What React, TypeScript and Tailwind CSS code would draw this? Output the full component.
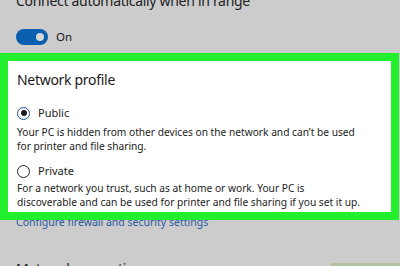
const font = { fontFamily: '"Noto Sans", "Open Sans", sans-serif' };

function Radio({ checked, label }: { checked: boolean; label: string }) {
  return (
    <div className="flex h-[14px] items-center gap-[8px]">
      <span
        className={`flex h-[13px] w-[13px] items-center justify-center rounded-full border-[1.5px] ${
          checked ? "border-[#1f4f8f]" : "border-[#222]"
        } bg-white`}
      >
        {checked ? <span className="h-[6px] w-[6px] rounded-full bg-[#1b1b1b]" /> : null}
      </span>
      <span className="text-[11px] leading-[14px] text-[#1b1b1b]">{label}</span>
    </div>
  );
}

export default function App() {
  return (
    <div className="relative h-[266px] w-[400px] overflow-hidden bg-[#cccccc]" style={font}>
      <p className="mt-[-9px] pl-4 text-[14px] leading-[20px] tracking-[-0.3px] text-[#222]">
        Connect automatically when in range
      </p>

      <div className="mt-[18px] flex items-center gap-2 pl-4">
        <span className="flex h-[16px] w-[32px] items-center justify-end rounded-full bg-[#0a5fb0] pr-[4px]">
          <span className="h-[8px] w-[8px] rounded-full bg-[#d6d6d6]" />
        </span>
        <span className="text-[11.5px] leading-[16px] text-[#1b1b1b]">On</span>
      </div>

      <div className="relative z-10 mt-[8px] w-[399px] border-[8px] border-[#22ef2d] bg-white pb-[3px] pl-[9px] pt-[10px]">
        <h2 className="text-[14px] leading-[18px] tracking-[-0.3px] text-[#1b1b1b]">Network profile</h2>

        <div className="mt-[17px]">
          <Radio checked label="Public" />
        </div>
        <p className="mt-[5px] text-[10.2px] leading-[14px] text-[#1b1b1b]">
          Your PC is hidden from other devices on the network and can’t be used
          <br />
          for printer and file sharing.
        </p>

        <div className="mt-[11px]">
          <Radio checked={false} label="Private" />
        </div>
        <p className="mt-[3px] text-[10.2px] leading-[14px] text-[#1b1b1b]">
          For a network you trust, such as at home or work. Your PC is
          <br />
          discoverable and can be used for printer and file sharing if you set it up.
        </p>
      </div>

      <p className="mt-[-5px] pl-4 text-[10.5px] leading-[14px] text-[#2c5aa0]">
        Configure firewall and security settings
      </p>

      <h2 className="mt-[31px] pl-4 text-[14px] leading-[18px] tracking-[-0.3px] text-[#222]">
        Metered connection
      </h2>

      <div className="absolute bottom-0 right-0 h-[3px] w-[69px] bg-[#b4c2a4]" />
    </div>
  );
}
